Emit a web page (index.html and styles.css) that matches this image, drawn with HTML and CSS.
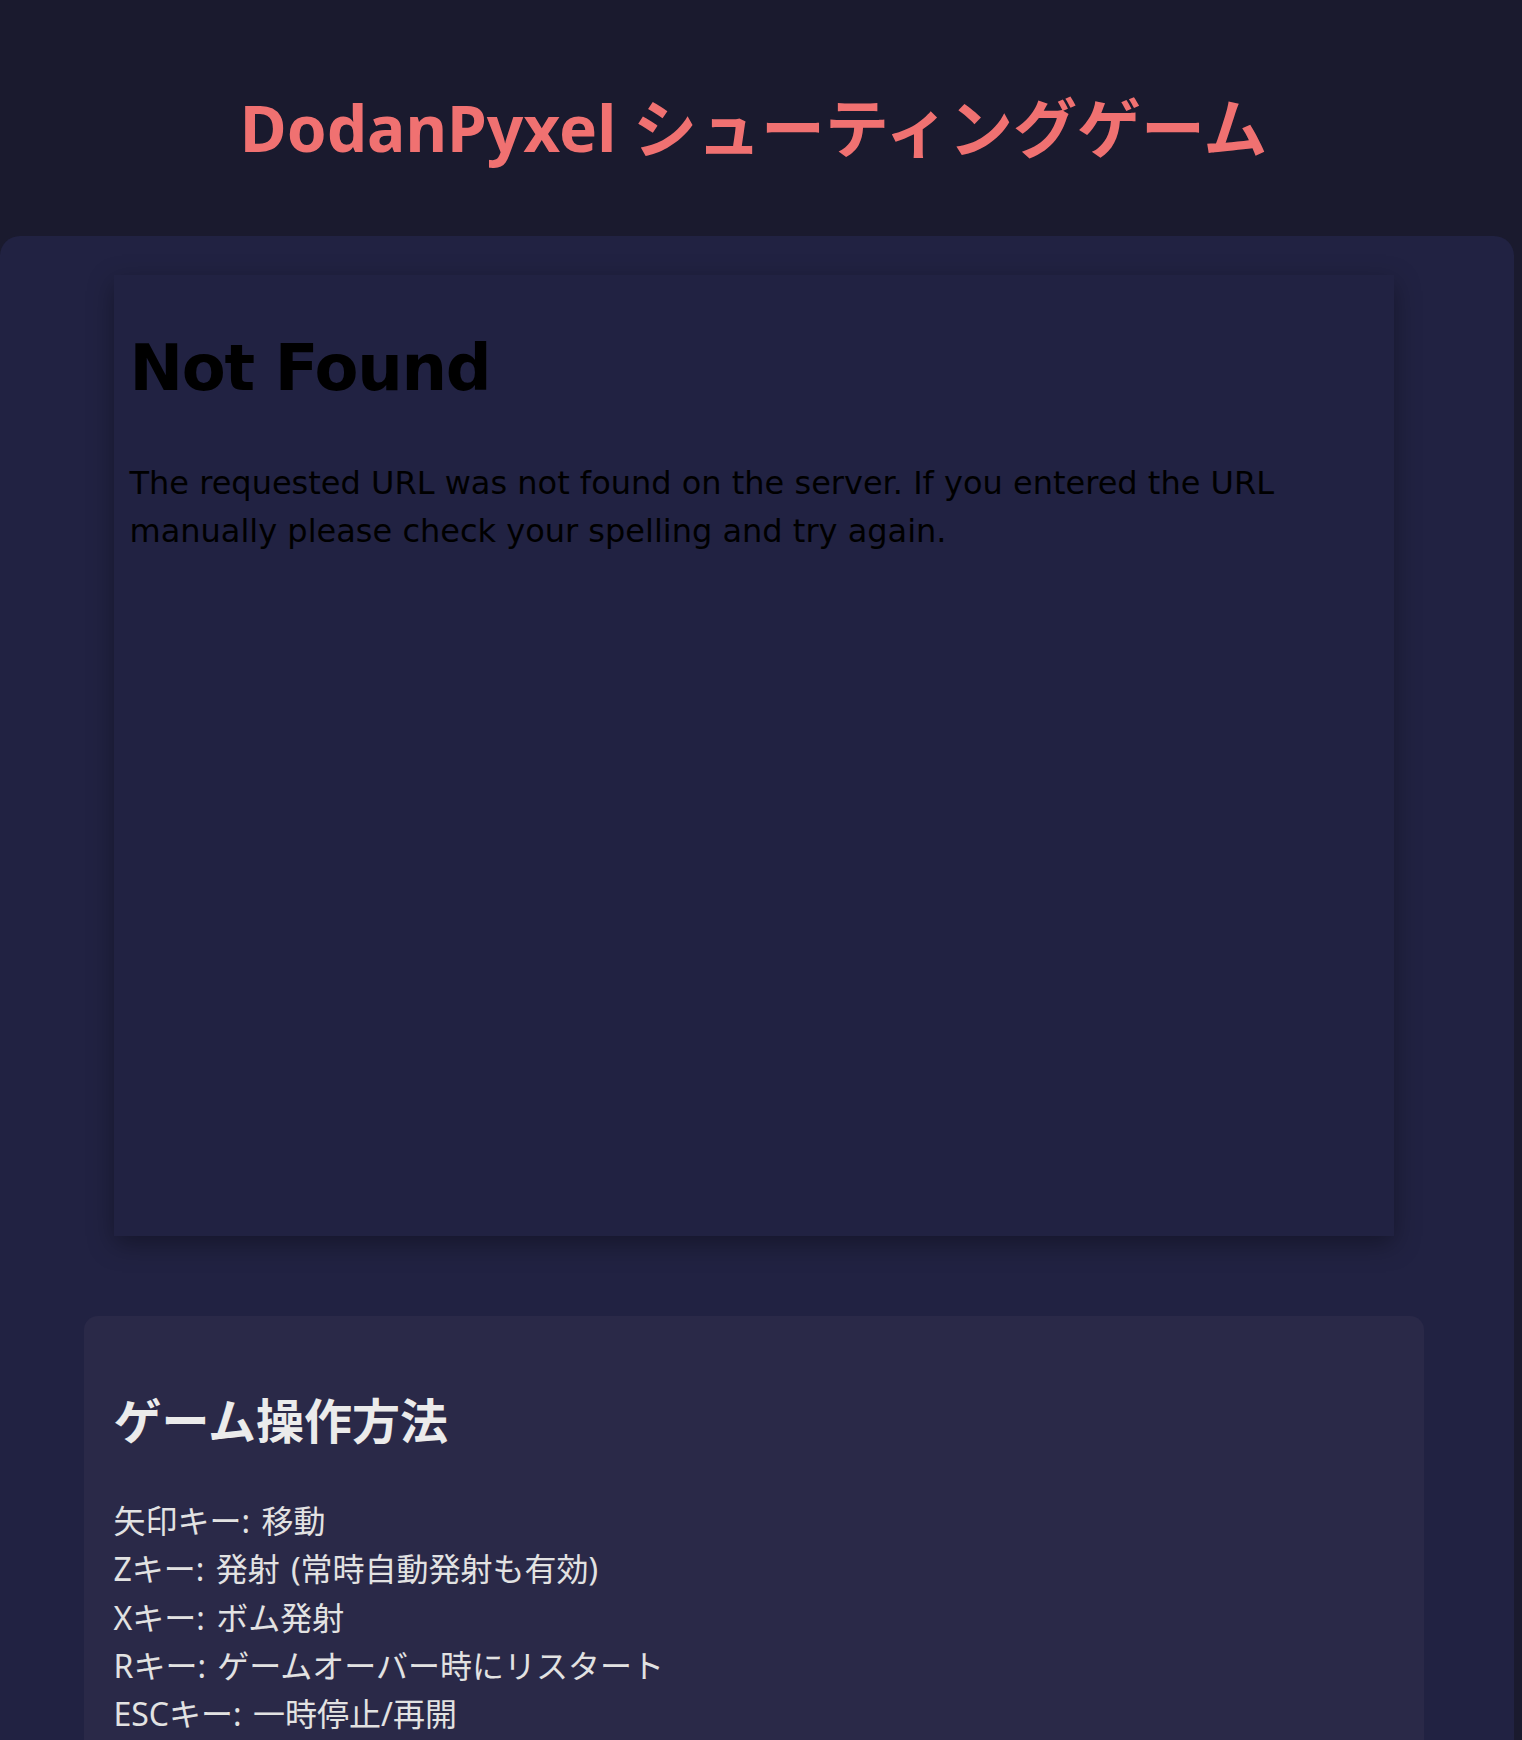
FILE: index.html
```html
<!DOCTYPE html>
<html lang="ja">
<head>
<meta charset="utf-8">
<title>DodanPyxel シューティングゲーム</title>
<link rel="stylesheet" href="styles.css">
</head>
<body>
<header class="header">
  <h1 class="title">DodanPyxel シューティングゲーム</h1>
</header>
<main class="container">
  <div class="inner">
    <div class="game-frame">
      <h1 class="nf-title">Not Found</h1>
      <p class="nf-text">The requested URL was not found on the server. If you entered the URL manually please check your spelling and try again.</p>
    </div>
    <section class="controls">
      <h2 class="controls-title">ゲーム操作方法</h2>
      <div class="controls-list">
        <div class="line">矢印キー: 移動</div>
        <div class="line">Zキー: 発射 (常時自動発射も有効)</div>
        <div class="line">Xキー: ボム発射</div>
        <div class="line">Rキー: ゲームオーバー時にリスタート</div>
        <div class="line">ESCキー: 一時停止/再開</div>
      </div>
    </section>
  </div>
</main>
</body>
</html>
```
FILE: styles.css
```css
html, body {
  margin: 0;
  padding: 0;
  overflow: hidden;
}
body {
  background: #1a1a2e;
  font-family: "Noto Sans", "Noto Sans CJK JP", sans-serif;
  color: #e0e0e0;
}
.header {
  width: 1507px;
  height: 236px;
  padding-top: 89px;
  box-sizing: border-box;
  text-align: center;
}
.title {
  margin: 0;
  font-size: 64px;
  line-height: 77px;
  font-weight: 700;
  color: #f07171;
}
.container {
  width: 1514px;
  background: #212242;
  border-radius: 20px 20px 0 0;
  padding-top: 39px;
  padding-bottom: 60px;
}
.inner {
  width: 1507px;
  display: flex;
  flex-direction: column;
  align-items: center;
}
.game-frame {
  width: 1280px;
  height: 961px;
  box-sizing: border-box;
  padding: 55px 16px 0;
  box-shadow: 0 8px 24px rgba(0, 0, 0, 0.35);
  color: #000;
  font-family: "DejaVu Sans", sans-serif;
}
.nf-title {
  margin: 0 0 52px;
  font-size: 64px;
  line-height: 77px;
  font-weight: 700;
  letter-spacing: -1.3px;
}
.nf-text {
  margin: 0;
  font-size: 32px;
  line-height: 48px;
}
.controls {
  margin-top: 80px;
  width: 1340px;
  box-sizing: border-box;
  background: #2a2948;
  border-radius: 14px;
  padding: 76px 30px 40px;
}
.controls-title {
  margin: 0 0 47px;
  font-size: 48px;
  line-height: 58px;
  font-weight: 700;
  color: #ebebeb;
}
.controls-list {
  font-size: 32px;
  line-height: 48.3px;
  word-spacing: 3px;
  color: #e2e2e2;
}
```
